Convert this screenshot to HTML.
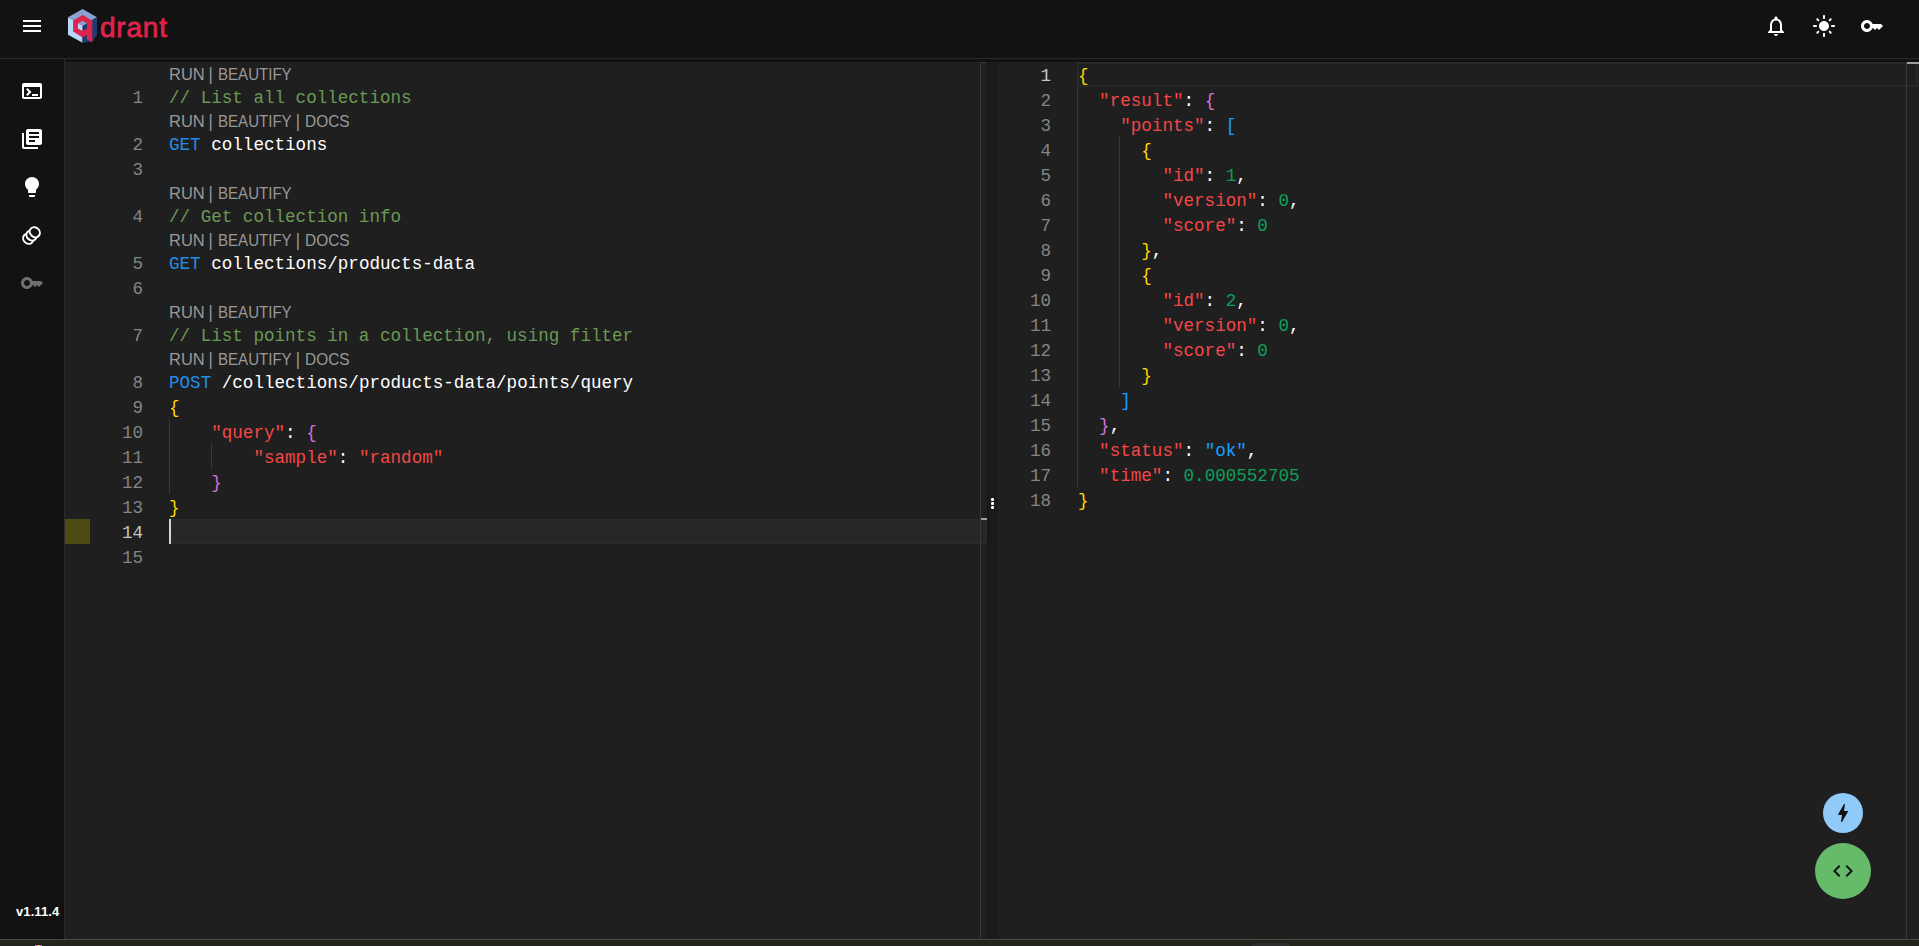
<!DOCTYPE html>
<html><head><meta charset="utf-8">
<style>
*{margin:0;padding:0;box-sizing:border-box}
html,body{width:1919px;height:946px;overflow:hidden;background:#1f1f1f;font-family:"Liberation Sans",sans-serif}
.abs{position:absolute}
#header{left:0;top:0;width:1919px;height:58px;background:#121212}
#hline{left:0;top:58px;width:1919px;height:1px;background:#2b2b2b}
#sidebar{left:0;top:59px;width:64px;height:880px;background:#121212}
#sline{left:64px;top:59px;width:1px;height:880px;background:#2b2b2b}
#topstrip{left:65px;top:59px;width:1854px;height:3px;background:#121212}
#bottom{left:0;top:939px;width:1919px;height:1px;background:#4a4b44}
#bottom2{left:0;top:940px;width:1919px;height:6px;background:#22241e}
.ed{background:#1f1f1f}
.code{font-family:"Liberation Mono",monospace;font-size:17.58px;white-space:pre;line-height:25px;height:25px;position:relative;top:2px}
.ln{font-family:"Liberation Mono",monospace;font-size:17.58px;white-space:pre;line-height:25px;height:25px;text-align:right;color:#858585;position:relative;top:2px}
.lens{font-family:"Liberation Sans",sans-serif;font-size:16.5px;white-space:pre;line-height:22px;height:22px;color:#999999;position:relative;top:1px}
.lens span{position:absolute;top:0;transform-origin:0 0}
.cm{color:#6a9955}.kw{color:#1f8ee6}.pt{color:#ffffff}.st{color:#f44747}.nm{color:#0aa05a}
.b1{color:#ffd700}.b2{color:#da70d6}.b3{color:#179fff}.pu{color:#ffffff}
.act{color:#c6c6c6}
.guide{position:absolute;width:1px;background:#393939}
svg{position:absolute;display:block}
</style></head><body>
<div id="header" class="abs"></div>
<div id="hline" class="abs"></div>
<div id="sidebar" class="abs"></div>
<div id="sline" class="abs"></div>
<div class="abs" style="left:63px;top:59px;width:1px;height:880px;background:#0e0e0e"></div>
<div id="topstrip" class="abs"></div>

<!-- header icons -->
<svg style="left:20px;top:14px" width="24" height="24" viewBox="0 0 24 24"><path fill="#fff" d="M3 18h18v-2H3v2zm0-5h18v-2H3v2zm0-7v2h18V6H3z"/></svg>

<!-- logo -->
<svg style="left:64px;top:6px" width="38" height="40" viewBox="0 0 38 40">
  <polygon points="4,11.2 18.6,3 33,11.2 18.6,19.5" fill="#8aa2d2"/>
  <polygon points="4,11.2 18.6,19.5 18.6,36.8 4,28.7" fill="#b9d8f6"/>
  <polygon points="18.6,19.5 33,11.2 33,29 28.5,35.6 18.6,36.8" fill="#1e3c6e"/>
  <polygon points="18.6,8.9 28.3,14.4 28.3,36.4 22.8,33.2 22.8,29.2 18.6,31.6 9.1,25.6 9.1,14.4" fill="#dc244c"/>
  <polygon points="13.9,17.5 18.6,14.8 23,17.5 18.6,20.1" fill="#8aa2d2"/>
  <polygon points="13.9,17.5 18.6,20.1 18.6,24.9 13.9,22.6" fill="#b9d8f6"/>
  <polygon points="18.6,20.1 23,17.5 23,22.6 18.6,24.9" fill="#1e3c6e"/>
  <polygon points="18.6,31.6 22.8,29.2 22.8,35 18.6,36.8" fill="#1e3c6e"/>
</svg>
<div class="abs" style="left:100px;top:12px;font-size:28px;line-height:32px;font-weight:normal;-webkit-text-stroke:0.8px #dc244c;color:#dc244c;letter-spacing:0.8px">drant</div>

<!-- top right icons -->
<svg style="left:1764px;top:14px" width="24" height="24" viewBox="0 0 24 24"><path fill="#fff" d="M12 22c1.1 0 2-.9 2-2h-4c0 1.1.89 2 2 2zm6-6v-5c0-3.07-1.64-5.64-4.5-6.32V4c0-.83-.67-1.5-1.5-1.5s-1.5.67-1.5 1.5v.68C7.63 5.36 6 7.92 6 11v5l-2 2v1h16v-1l-2-2zm-2 1H8v-6c0-2.48 1.51-4.5 4-4.5s4 2.02 4 4.5v6z"/></svg>
<svg style="left:1812px;top:14px" width="24" height="24" viewBox="0 0 24 24"><path fill="#fff" d="M12 7c-2.76 0-5 2.24-5 5s2.24 5 5 5 5-2.24 5-5-2.24-5-5-5zM2 13h2c.55 0 1-.45 1-1s-.45-1-1-1H2c-.55 0-1 .45-1 1s.45 1 1 1zm18 0h2c.55 0 1-.45 1-1s-.45-1-1-1h-2c-.55 0-1 .45-1 1s.45 1 1 1zM11 2v2c0 .55.45 1 1 1s1-.45 1-1V2c0-.55-.45-1-1-1s-1 .45-1 1zm0 18v2c0 .55.45 1 1 1s1-.45 1-1v-2c0-.55-.45-1-1-1s-1 .45-1 1zM5.99 4.58c-.39-.39-1.03-.39-1.41 0-.39.39-.39 1.03 0 1.41l1.06 1.06c.39.39 1.03.39 1.41 0s.39-1.03 0-1.41L5.99 4.58zm12.37 12.37c-.39-.39-1.030-.39-1.41 0-.39.39-.39 1.03 0 1.41l1.06 1.06c.39.39 1.03.39 1.41 0 .39-.39.39-1.03 0-1.41l-1.06-1.06zm1.06-10.96c.39-.39.39-1.03 0-1.41-.39-.39-1.03-.39-1.41 0l-1.06 1.06c-.39.39-.39 1.03 0 1.41s1.03.39 1.41 0l1.06-1.06zM7.05 18.36c.39-.39.39-1.03 0-1.41-.39-.39-1.03-.39-1.41 0l-1.06 1.06c-.39.39-.39 1.03 0 1.41s1.03.39 1.41 0l1.06-1.06z"/></svg>
<svg style="left:1860px;top:14px" width="24" height="24" viewBox="0 0 24 24"><path fill="#fff" d="M21 10h-8.35C11.83 7.67 9.61 6 7 6c-3.31 0-6 2.690-6 6s2.69 6 6 6c2.61 0 4.83-1.67 5.65-4H13l2 2 2-2 2 2 4-4.04L21 10zM7 15c-1.65 0-3-1.35-3-3s1.35-3 3-3 3 1.35 3 3-1.35 3-3 3z"/></svg>

<!-- sidebar icons -->
<svg style="left:20px;top:79px" width="24" height="24" viewBox="0 0 24 24"><path fill="#fff" d="M20 4H4c-1.11 0-2 .9-2 2v12c0 1.1.89 2 2 2h16c1.1 0 2-.9 2-2V6c0-1.1-.89-2-2-2zm0 14H4V8h16v10zm-2-1h-6v-2h6v2zM7.5 17l-1.41-1.41L8.67 13l-2.59-2.59L7.5 9l4 4-4 4z"/></svg>
<svg style="left:20px;top:127px" width="24" height="24" viewBox="0 0 24 24"><path fill="#fff" d="M4 6H2v14c0 1.1.9 2 2 2h14v-2H4V6zm16-4H8c-1.1 0-2 .9-2 2v12c0 1.1.9 2 2 2h12c1.1 0 2-.9 2-2V4c0-1.1-.9-2-2-2zm-1 9H9V9h10v2zm-4 4H9v-2h6v2zm4-8H9V5h10v2z"/></svg>
<svg style="left:20px;top:175px" width="24" height="24" viewBox="0 0 24 24"><path fill="#fff" d="M9 21c0 .5.4 1 1 1h4c.6 0 1-.5 1-1v-1H9v1zm3-19C8.1 2 5 5.1 5 9c0 2.4 1.2 4.5 3 5.7V17c0 .5.4 1 1 1h6c.6 0 1-.5 1-1v-2.3c1.8-1.3 3-3.4 3-5.7 0-3.9-3.1-7-7-7z"/></svg>
<svg style="left:20px;top:223px" width="24" height="24" viewBox="0 0 24 24"><g fill="#121212" stroke="#fff" stroke-width="2">
  <ellipse cx="8.2" cy="15.8" rx="5.4" ry="4.7" transform="rotate(45 8.2 15.8)"/>
  <ellipse cx="11.5" cy="12.5" rx="5.4" ry="4.7" transform="rotate(45 11.5 12.5)"/>
  <ellipse cx="14.8" cy="9.2" rx="5.4" ry="4.7" transform="rotate(45 14.8 9.2)"/></g></svg>
<svg style="left:20px;top:271px" width="24" height="24" viewBox="0 0 24 24"><path fill="#6f6f6f" d="M21 10h-8.35C11.83 7.67 9.61 6 7 6c-3.31 0-6 2.69-6 6s2.69 6 6 6c2.61 0 4.83-1.67 5.65-4H13l2 2 2-2 2 2 4-4.04L21 10zM7 15c-1.65 0-3-1.35-3-3s1.35-3 3-3 3 1.35 3 3-1.35 3-3 3z"/></svg>
<div class="abs" style="left:16px;top:904px;font-size:13px;font-weight:bold;color:#fff;letter-spacing:0.1px">v1.11.4</div>

<!-- LEFT EDITOR -->
<div class="abs ed" style="left:65px;top:62px;width:915px;height:877px"></div>
<!-- current line -->
<div class="abs" style="left:65px;top:519px;width:25px;height:25px;background:#4d4a12"></div>
<div class="abs" style="left:169px;top:519px;width:818px;height:25px;background:#262626;border-right:2px solid #2a2a2a;border-top:2px solid #2a2a2a;border-bottom:2px solid #2a2a2a"></div>
<div class="abs" style="left:169px;top:519px;width:2px;height:25px;background:#d4d4d4"></div>
<div class="guide" style="left:169px;top:419px;height:75px"></div>
<div class="guide" style="left:211px;top:444px;height:25px"></div>

<div id="leftln" class="abs" style="left:89px;top:62px;width:54px">
<div style="height:22px"></div>
<div class="ln">1</div>
<div style="height:22px"></div>
<div class="ln">2</div>
<div class="ln">3</div>
<div style="height:22px"></div>
<div class="ln">4</div>
<div style="height:22px"></div>
<div class="ln">5</div>
<div class="ln">6</div>
<div style="height:22px"></div>
<div class="ln">7</div>
<div style="height:22px"></div>
<div class="ln">8</div>
<div class="ln">9</div>
<div class="ln">10</div>
<div class="ln">11</div>
<div class="ln">12</div>
<div class="ln">13</div>
<div class="ln act">14</div>
<div class="ln">15</div>
<!--END leftln--></div>
<div id="leftcode" class="abs" style="left:169px;top:62px;width:800px">
<div class="lens"><span style="left:0">RUN</span><span style="left:39.6px;transform:scaleY(1.15);transform-origin:0 72%">|</span><span style="left:48.6px;transform:scaleX(.913)">BEAUTIFY</span></div>
<div class="code"><span class="cm">// List all collections</span></div>
<div class="lens"><span style="left:0">RUN</span><span style="left:39.6px;transform:scaleY(1.15);transform-origin:0 72%">|</span><span style="left:48.6px;transform:scaleX(.913)">BEAUTIFY</span><span style="left:126.8px;transform:scaleY(1.15);transform-origin:0 72%">|</span><span style="left:135.8px;transform:scaleX(.935)">DOCS</span></div>
<div class="code"><span class="kw">GET</span> <span class="pt">collections</span></div>
<div class="code"></div>
<div class="lens"><span style="left:0">RUN</span><span style="left:39.6px;transform:scaleY(1.15);transform-origin:0 72%">|</span><span style="left:48.6px;transform:scaleX(.913)">BEAUTIFY</span></div>
<div class="code"><span class="cm">// Get collection info</span></div>
<div class="lens"><span style="left:0">RUN</span><span style="left:39.6px;transform:scaleY(1.15);transform-origin:0 72%">|</span><span style="left:48.6px;transform:scaleX(.913)">BEAUTIFY</span><span style="left:126.8px;transform:scaleY(1.15);transform-origin:0 72%">|</span><span style="left:135.8px;transform:scaleX(.935)">DOCS</span></div>
<div class="code"><span class="kw">GET</span> <span class="pt">collections/products-data</span></div>
<div class="code"></div>
<div class="lens"><span style="left:0">RUN</span><span style="left:39.6px;transform:scaleY(1.15);transform-origin:0 72%">|</span><span style="left:48.6px;transform:scaleX(.913)">BEAUTIFY</span></div>
<div class="code"><span class="cm">// List points in a collection, using filter</span></div>
<div class="lens"><span style="left:0">RUN</span><span style="left:39.6px;transform:scaleY(1.15);transform-origin:0 72%">|</span><span style="left:48.6px;transform:scaleX(.913)">BEAUTIFY</span><span style="left:126.8px;transform:scaleY(1.15);transform-origin:0 72%">|</span><span style="left:135.8px;transform:scaleX(.935)">DOCS</span></div>
<div class="code"><span class="kw">POST</span> <span class="pt">/collections/products-data/points/query</span></div>
<div class="code"><span class="b1">{</span></div>
<div class="code">    <span class="st">"query"</span><span class="pu">:</span> <span class="b2">{</span></div>
<div class="code">        <span class="st">"sample"</span><span class="pu">:</span> <span class="st">"random"</span></div>
<div class="code">    <span class="b2">}</span></div>
<div class="code"><span class="b1">}</span></div>
<div class="code"></div>
<div class="code"></div>
<!--END leftcode--></div>

<!-- left scrollbar -->
<div class="abs" style="left:980px;top:62px;width:1px;height:877px;background:#3a3a3a"></div>
<div class="abs" style="left:981px;top:518px;width:6px;height:2px;background:#a0a0a0"></div>
<div class="abs" style="left:981px;top:62px;width:6px;height:1px;background:#383838"></div>
<div class="abs" style="left:987px;top:62px;width:1px;height:877px;background:#161616"></div>
<!-- splitter -->
<div class="abs" style="left:988px;top:62px;width:10px;height:877px;background:#181b1e"></div>
<div class="abs" style="left:991px;top:498px;width:3px;height:3px;background:#fff;border-radius:1px"></div>
<div class="abs" style="left:991px;top:502px;width:3px;height:3px;background:#fff;border-radius:1px"></div>
<div class="abs" style="left:991px;top:506px;width:3px;height:3px;background:#fff;border-radius:1px"></div>

<!-- RIGHT EDITOR -->
<div class="abs ed" style="left:998px;top:62px;width:908px;height:877px"></div>
<div class="abs" style="left:1077px;top:62px;width:841px;height:25px;border:2px solid #282828"></div>
<div class="guide" style="left:1077px;top:87px;height:400px"></div>
<div class="guide" style="left:1119px;top:137px;height:250px"></div>
<div id="rightln" class="abs" style="left:997px;top:62px;width:54px">
<div class="ln act">1</div>
<div class="ln">2</div>
<div class="ln">3</div>
<div class="ln">4</div>
<div class="ln">5</div>
<div class="ln">6</div>
<div class="ln">7</div>
<div class="ln">8</div>
<div class="ln">9</div>
<div class="ln">10</div>
<div class="ln">11</div>
<div class="ln">12</div>
<div class="ln">13</div>
<div class="ln">14</div>
<div class="ln">15</div>
<div class="ln">16</div>
<div class="ln">17</div>
<div class="ln">18</div>
<!--END rightln--></div>
<div id="rightcode" class="abs" style="left:1078px;top:62px;width:800px">
<div class="code"><span class="b1">{</span></div>
<div class="code">  <span class="st">"result"</span><span class="pu">:</span> <span class="b2">{</span></div>
<div class="code">    <span class="st">"points"</span><span class="pu">:</span> <span class="b3">[</span></div>
<div class="code">      <span class="b1">{</span></div>
<div class="code">        <span class="st">"id"</span><span class="pu">:</span> <span class="nm">1</span><span class="pu">,</span></div>
<div class="code">        <span class="st">"version"</span><span class="pu">:</span> <span class="nm">0</span><span class="pu">,</span></div>
<div class="code">        <span class="st">"score"</span><span class="pu">:</span> <span class="nm">0</span></div>
<div class="code">      <span class="b1">}</span><span class="pu">,</span></div>
<div class="code">      <span class="b1">{</span></div>
<div class="code">        <span class="st">"id"</span><span class="pu">:</span> <span class="nm">2</span><span class="pu">,</span></div>
<div class="code">        <span class="st">"version"</span><span class="pu">:</span> <span class="nm">0</span><span class="pu">,</span></div>
<div class="code">        <span class="st">"score"</span><span class="pu">:</span> <span class="nm">0</span></div>
<div class="code">      <span class="b1">}</span></div>
<div class="code">    <span class="b3">]</span></div>
<div class="code">  <span class="b2">}</span><span class="pu">,</span></div>
<div class="code">  <span class="st">"status"</span><span class="pu">:</span> <span class="b3">"ok"</span><span class="pu">,</span></div>
<div class="code">  <span class="st">"time"</span><span class="pu">:</span> <span class="nm">0.000552705</span></div>
<div class="code"><span class="b1">}</span></div>
<!--END rightcode--></div>
<div class="abs" style="left:1906px;top:62px;width:1px;height:877px;background:#3a3a3a"></div>
<div class="abs" style="left:1907px;top:62px;width:12px;height:2px;background:#a0a0a0"></div>

<!-- FABs -->
<div class="abs" style="left:1823px;top:793px;width:40px;height:40px;border-radius:50%;background:#90caf9"></div>
<svg style="left:1831px;top:801px" width="24" height="24" viewBox="0 0 24 24"><path fill="#111" d="M11 21h-1l1-7H7.5c-.58 0-.57-.32-.38-.66.19-.34.05-.08.07-.12C8.48 10.94 10.42 7.54 13 3h1l-1 7h3.5c.49 0 .56.33.47.51l-.07.15C12.96 17.55 11 21 11 21z"/></svg>
<div class="abs" style="left:1815px;top:843px;width:56px;height:56px;border-radius:50%;background:#66bb6a"></div>
<svg style="left:1831px;top:859px" width="24" height="24" viewBox="0 0 24 24"><path fill="#111" d="M9.4 16.6 4.8 12l4.6-4.6L8 6l-6 6 6 6 1.4-1.4zm5.2 0 4.6-4.6-4.6-4.6L16 6l6 6-6 6-1.4-1.4z"/></svg>

<div id="bottom" class="abs"></div>
<div id="bottom2" class="abs"></div>
<div class="abs" style="left:1252px;top:943px;width:38px;height:8px;border-radius:4px;background:#2d2d2d"></div>
<div class="abs" style="left:35px;top:945px;width:7px;height:1px;background:linear-gradient(90deg,#8a9a8a,#e070d0 25%,#f0d070 50%,#e070d0 75%,#8a9a8a)"></div>
</body></html>
